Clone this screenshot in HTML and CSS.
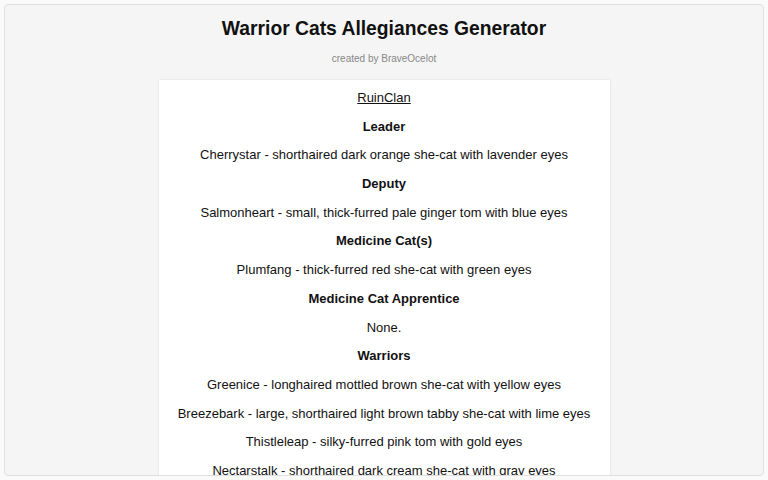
FILE: index.html
```html
<!DOCTYPE html>
<html>
<head>
<meta charset="utf-8">
<link rel="stylesheet" href="styles.css">
</head>
<body>
<div class="frame">
  <h1 class="title">Warrior Cats Allegiances Generator</h1>
  <p class="credit">created by BraveOcelot</p>
  <div class="card">
    <p class="clan">RuinClan</p>
    <p class="rank">Leader</p>
    <p>Cherrystar - shorthaired dark orange she-cat with lavender eyes</p>
    <p class="rank">Deputy</p>
    <p>Salmonheart - small, thick-furred pale ginger tom with blue eyes</p>
    <p class="rank">Medicine Cat(s)</p>
    <p>Plumfang - thick-furred red she-cat with green eyes</p>
    <p class="rank">Medicine Cat Apprentice</p>
    <p>None.</p>
    <p class="rank">Warriors</p>
    <p>Greenice - longhaired mottled brown she-cat with yellow eyes</p>
    <p>Breezebark - large, shorthaired light brown tabby she-cat with lime eyes</p>
    <p>Thistleleap - silky-furred pink tom with gold eyes</p>
    <p>Nectarstalk - shorthaired dark cream she-cat with gray eyes</p>
  </div>
</div>
</body>
</html>
```

FILE: styles.css
```css
html, body {
  margin: 0;
  padding: 0;
  background: #fafafa;
}
body {
  padding: 4px;
  font-family: "Liberation Sans", Arial, sans-serif;
  color: #111;
}
.frame {
  border: 1px solid #e0e0e0;
  border-radius: 4px;
  background: #f5f5f5;
  overflow: hidden;
  display: flex;
  flex-direction: column;
  align-items: center;
  box-sizing: border-box;
  padding-top: 12px;
  height: 472px;
}
.title {
  margin: 0;
  font-size: 19.3px;
  line-height: 23px;
  font-weight: bold;
  color: #111;
}
.credit {
  margin: 13px 0 0;
  font-size: 10px;
  line-height: 12px;
  color: #888;
}
.card {
  margin-top: 15px;
  width: 451px;
  box-sizing: border-box;
  background: #fff;
  box-shadow: 0 0 2px rgba(0, 0, 0, 0.12);
  padding: 10px 10px 10px;
  text-align: center;
  flex-shrink: 0;
}
.card p {
  margin: 0 0 13.7px;
  font-size: 13px;
  line-height: 15px;
}
.card .clan {
  text-decoration: underline;
}
.card .rank {
  font-weight: bold;
}
```
